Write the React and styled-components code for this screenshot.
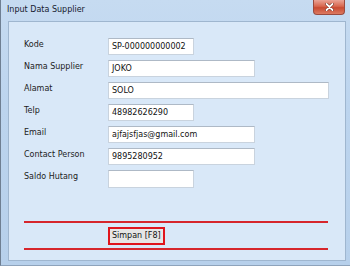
import React from "react"
import styled, { createGlobalStyle } from "styled-components"

const Global = createGlobalStyle`
  html, body { margin: 0; padding: 0; background: #b9d1ea; }
  body { font-family: "DejaVu Sans", Verdana, sans-serif; font-size: 8px; color: #1c1c1c; }
`

const Window = styled.div`
  width: 350px;
  height: 266px;
  box-sizing: border-box;
  border-left: 1px solid #6f7f92;
  border-bottom: 1px solid #8ea3bb;
  background: linear-gradient(180deg, #c6dbf1 0%, #bcd4ee 40%, #b7d0eb 100%);
  display: flex;
  flex-direction: column;
`

const TitleBar = styled.div`
  height: 21px;
  display: flex;
  align-items: flex-start;
  justify-content: space-between;
  padding-left: 6px;
  padding-right: 5px;
`

const Title = styled.span`
  margin-top: 5px;
  color: #16202e;
  font-size: 8px;
`

const CloseButton = styled.div`
  width: 32px;
  height: 15px;
  box-sizing: border-box;
  border: 1px solid #9a4a3e;
  border-top: none;
  border-radius: 0 0 4px 4px;
  background: linear-gradient(180deg, #eaa396 0%, #d8674f 45%, #c94a32 55%, #dc7a60 100%);
  display: flex;
  align-items: center;
  justify-content: center;
`

const Panel = styled.div`
  flex: 1;
  margin: 0 4px 4px 7px;
  border: 1px solid #9fb6cf;
  background: #d9e8f8;
  padding: 16px 17px 0 15px;
  display: flex;
  flex-direction: column;
`

const Form = styled.div`
  display: grid;
  grid-template-columns: 84px 1fr;
  row-gap: 5px;
  align-items: start;
`

const Label = styled.div`
  height: 17px;
  line-height: 14px;
  color: #1c1c1c;
`

const Field = styled.div`
  width: ${p => p.w}px;
  height: ${p => p.h || 17}px;
  box-sizing: border-box;
  background: #ffffff;
  border: 1px solid #c9d3de;
  border-top-color: #aeb9c6;
  padding-left: 3px;
  line-height: 15px;
  color: #111;
  white-space: nowrap;
`

const Rule = styled.div`
  height: 2px;
  background: #d6262c;
`

const Footer = styled.div`
  margin-top: ${p => p.top}px;
  display: flex;
  flex-direction: column;
`

const ButtonRow = styled.div`
  padding: 4px 0 3px 84px;
`

const SaveButton = styled.div`
  display: inline-block;
  box-sizing: border-box;
  height: 18px;
  padding: 0 2px;
  border: 2px solid #e0141c;
  background: #e6e6e6;
  line-height: 14px;
  color: #111;
`

const fields = [
  { label: "Kode", value: "SP-000000000002", w: 86 },
  { label: "Nama Supplier", value: "JOKO", w: 147 },
  { label: "Alamat", value: "SOLO", w: 221 },
  { label: "Telp", value: "48982626290", w: 86 },
  { label: "Email", value: "ajfajsfjas@gmail.com", w: 147 },
  { label: "Contact Person", value: "9895280952", w: 147 },
  { label: "Saldo Hutang", value: "", w: 86, h: 18 },
]

export default function App() {
  return (
    <>
      <Global />
      <Window>
        <TitleBar>
          <Title>Input Data Supplier</Title>
          <CloseButton>
            <svg width="9" height="8" viewBox="0 0 9 8">
              <path d="M1.5 1 L7.5 7 M7.5 1 L1.5 7" stroke="#6a2418" strokeWidth="3" strokeLinecap="round" />
              <path d="M1.5 1 L7.5 7 M7.5 1 L1.5 7" stroke="#ffffff" strokeWidth="1.8" strokeLinecap="round" />
            </svg>
          </CloseButton>
        </TitleBar>
        <Panel>
          <Form>
            {fields.map(f => (
              <React.Fragment key={f.label}>
                <Label>{f.label}</Label>
                <Field w={f.w} h={f.h}>{f.value}</Field>
              </React.Fragment>
            ))}
          </Form>
          <Footer top={33}>
            <Rule />
            <ButtonRow>
              <SaveButton>Simpan [F8]</SaveButton>
            </ButtonRow>
            <Rule />
          </Footer>
        </Panel>
      </Window>
    </>
  )
}
